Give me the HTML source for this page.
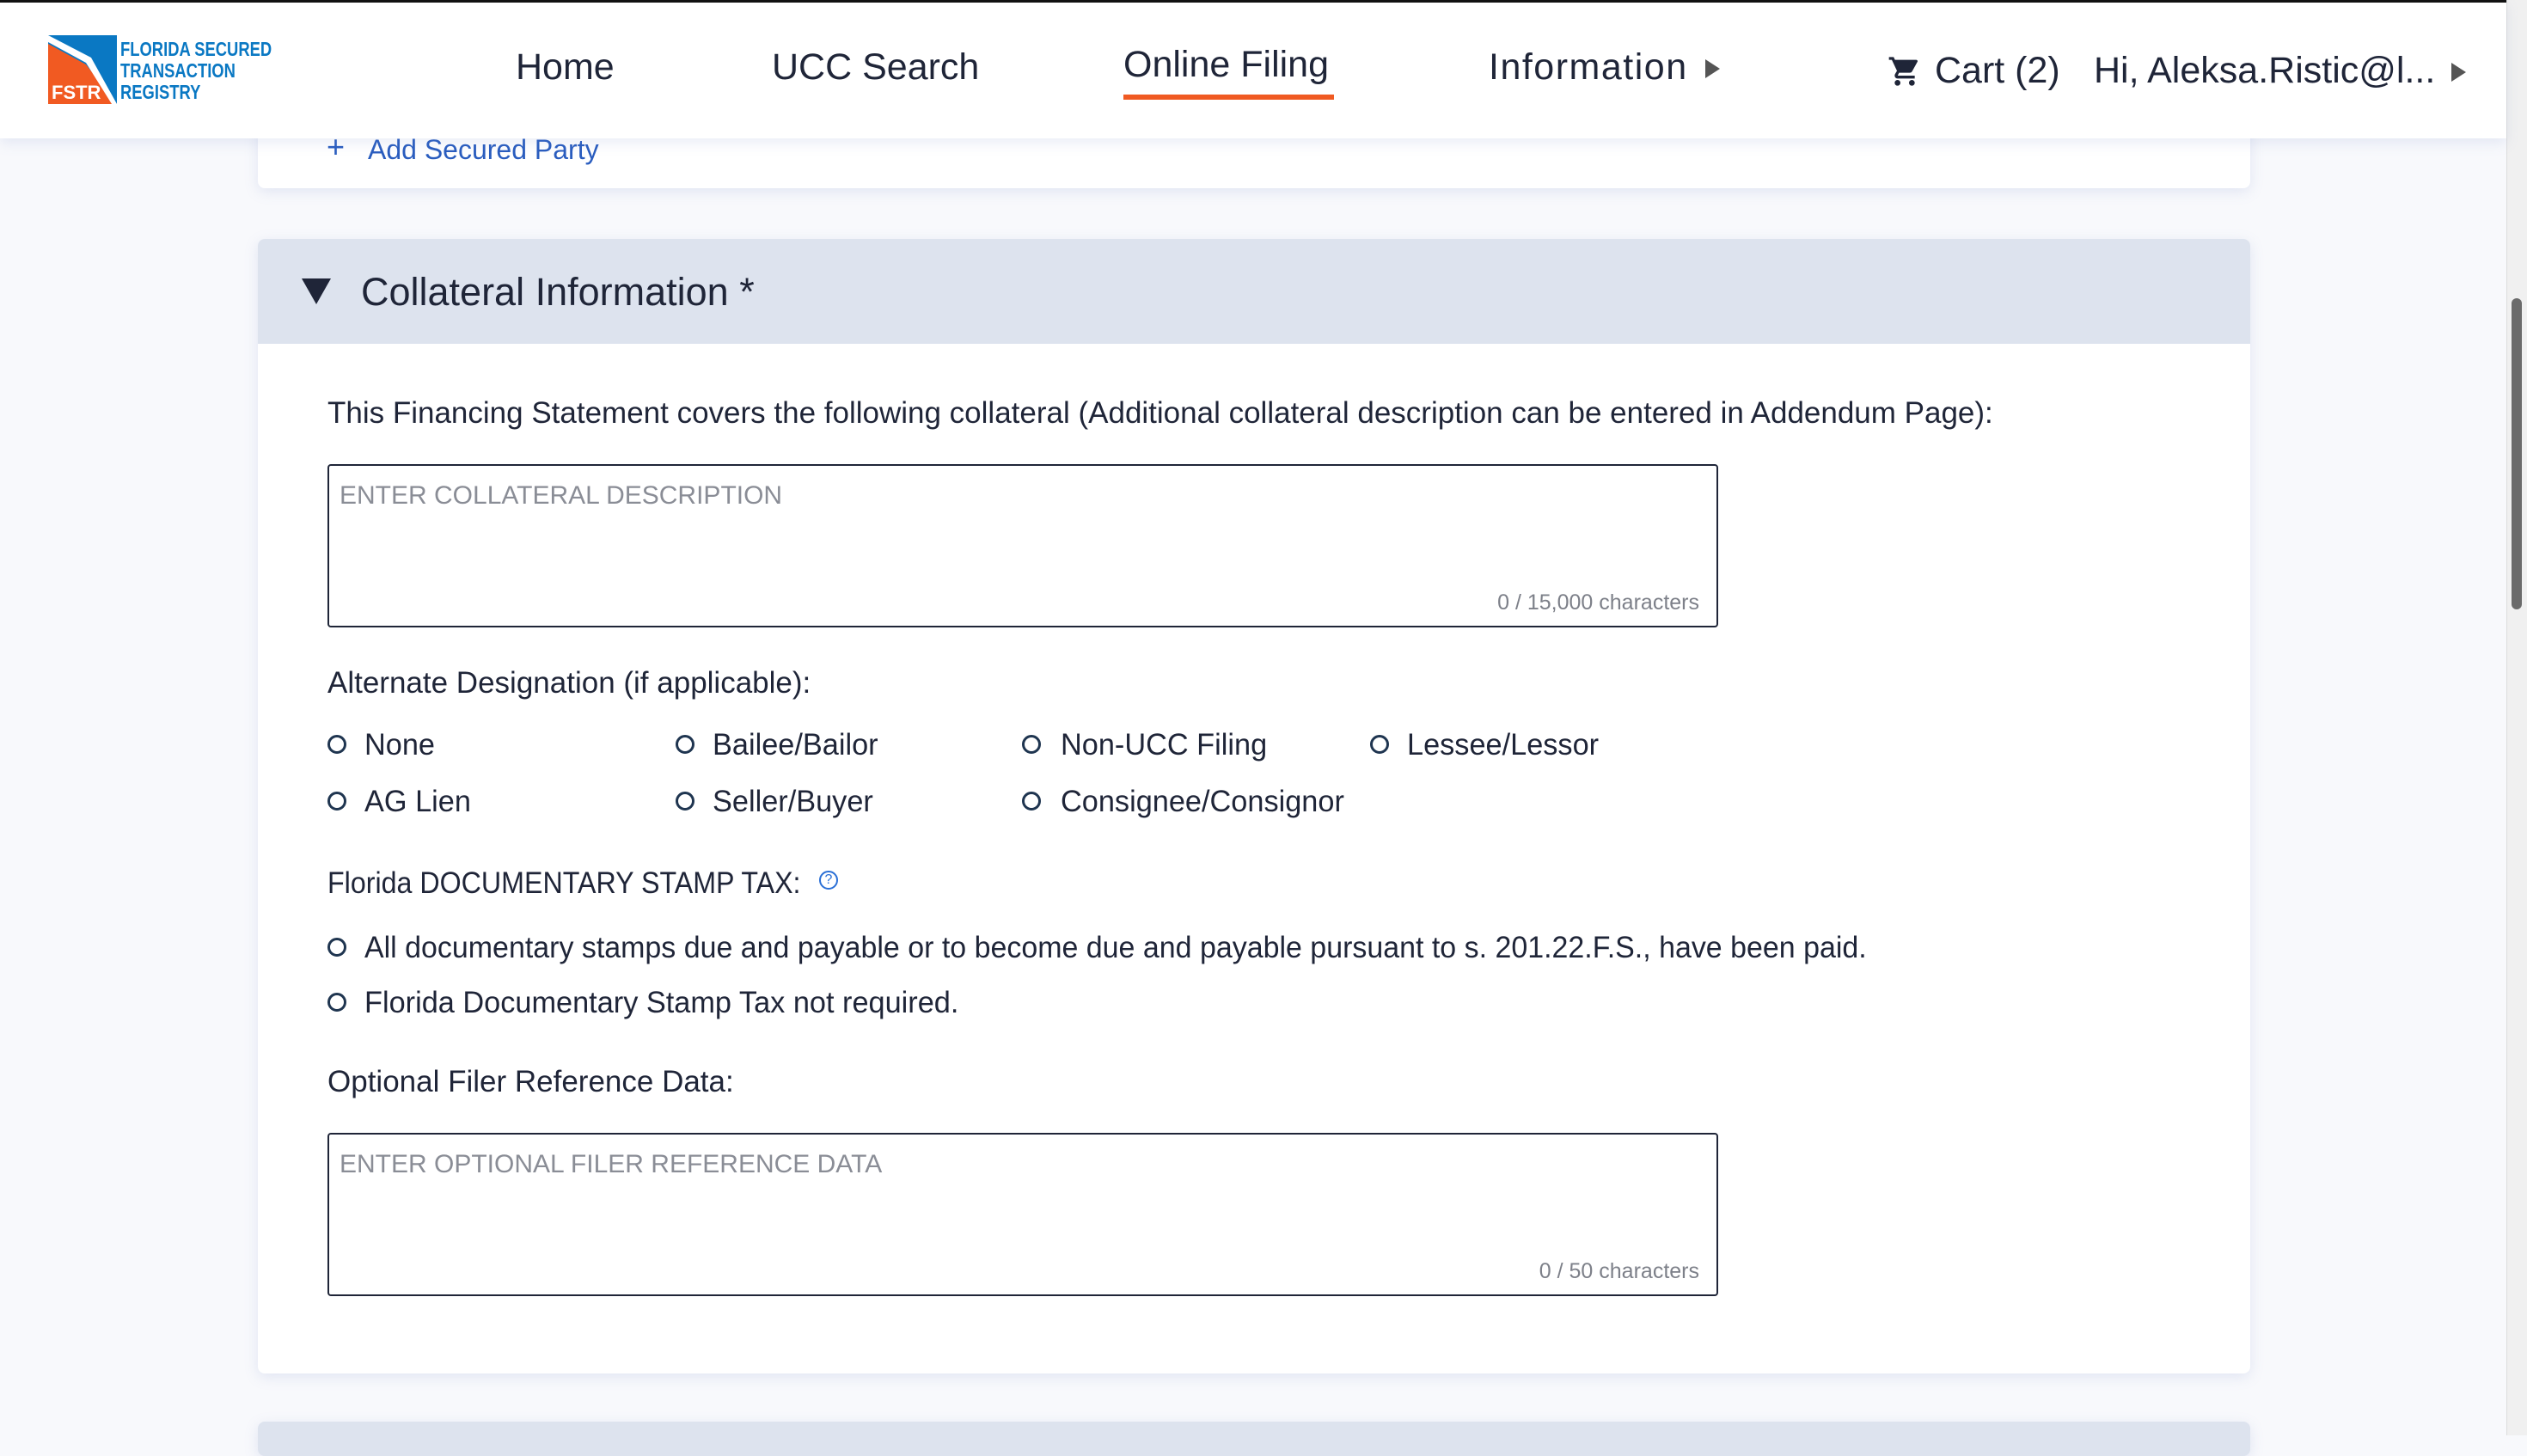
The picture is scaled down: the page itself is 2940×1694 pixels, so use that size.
<!DOCTYPE html>
<html><head><meta charset="utf-8"><style>
*{box-sizing:border-box;margin:0;padding:0}
body{width:2940px;height:1670px;overflow:hidden;background:#f8f9fc;font-family:"Liberation Sans",sans-serif;color:#1f2538;position:relative}
.abs{position:absolute;white-space:nowrap}
.hdr{position:absolute;left:0;top:0;width:2916px;height:161px;background:#fff;border-top:3px solid #111;box-shadow:0 6px 14px rgba(120,140,200,.15);z-index:5}
.nav{font-size:43px;top:51px}
.card{position:absolute;left:300px;width:2318px;background:#fff;border-radius:8px;box-shadow:0 4px 16px rgba(120,140,200,.18)}
.lbl{font-size:35px}
.ta{position:absolute;left:381px;width:1618px;height:190px;border:2px solid #1f2538;border-radius:4px;background:#fff}
.ph{position:absolute;left:12px;top:18px;font-size:30px;color:#8a8d96}
.cnt{position:absolute;right:20px;bottom:12px;font-size:25px;color:#7d8089}
.r{position:absolute;width:22px;height:22px;border:3px solid #1f3550;border-radius:50%}
.sx{transform-origin:left center}
</style></head><body>
<div class="hdr">
 <svg class="abs" style="left:56px;top:38px" width="80" height="80" viewBox="0 0 80 80">
  <polygon points="0,0 80,0 80,80 0,80" fill="#0a78c3"/>
  <polygon points="0,10 44,34 80,80 0,80" fill="#f15a22"/>
  <polygon points="0,0 50,26 80,80 74,80 44,32 0,8" fill="#fff"/>
  <text x="4" y="74" font-size="22" fill="#fff" font-family="Liberation Sans" font-weight="bold">FSTR</text>
 </svg>
 <div class="abs" style="left:140px;top:42px;font-size:23px;line-height:25px;color:#0a78c3;font-weight:bold;transform:scaleX(.8);transform-origin:left">FLORIDA SECURED<br>TRANSACTION<br>REGISTRY</div>
 <div class="abs nav" style="left:600px">Home</div>
 <div class="abs nav" style="left:898px">UCC Search</div>
 <div class="abs nav" style="left:1307px;top:48px">Online Filing</div>
 <div class="abs" style="left:1307px;top:107px;width:245px;height:6px;background:#f05a22"></div>
 <div class="abs nav" style="left:1732px;letter-spacing:1.5px">Information</div>
 <div class="abs" style="left:1984px;top:66px;border-left:17px solid #555;border-top:11px solid transparent;border-bottom:11px solid transparent"></div>
 <svg class="abs" style="left:2196px;top:60px" width="40" height="40" viewBox="0 0 24 24"><path fill="#1f2538" d="M7 18c-1.1 0-2 .9-2 2s.9 2 2 2 2-.9 2-2-.9-2-2-2zM1 2v2h2l3.6 7.6-1.4 2.4c-.1.3-.2.6-.2 1 0 1.1.9 2 2 2h12v-2H7.4c-.1 0-.2-.1-.2-.2v-.1l.9-1.7h7.4c.8 0 1.4-.4 1.7-1l3.6-6.5c.1-.2.2-.3.2-.5 0-.6-.4-1-1-1H5.2l-.9-2H1zm16 16c-1.1 0-2 .9-2 2s.9 2 2 2 2-.9 2-2-.9-2-2-2z"/></svg>
 <div class="abs nav" style="left:2251px;top:55px">Cart (2)</div>
 <div class="abs nav" style="left:2436px;top:55px">Hi, Aleksa.Ristic@l...</div>
 <div class="abs" style="left:2852px;top:70px;border-left:17px solid #555;border-top:11px solid transparent;border-bottom:11px solid transparent"></div>
</div>
<div class="abs" style="left:2916px;top:0;width:24px;height:1670px;background:#f0f0f0;border-left:1px solid #ddd"></div>
<div class="abs" style="left:2922px;top:347px;width:12px;height:362px;background:#6b6b6b;border-radius:6px"></div>

<div class="card" style="top:100px;height:119px">
 <div class="abs" style="left:80px;top:50px;font-size:36px;color:#2a5dbf">+</div>
 <div class="abs" style="left:128px;top:56px;font-size:32px;color:#2a5dbf">Add Secured Party</div>
</div>

<div class="card" style="top:278px;height:1320px;overflow:hidden">
 <div class="abs" style="left:0;top:0;width:2318px;height:122px;background:#dde3ee"></div>
 <div class="abs" style="left:51px;top:46px;border-top:30px solid #1f2538;border-left:17px solid transparent;border-right:17px solid transparent"></div>
 <div class="abs" style="left:120px;top:36px;font-size:45px">Collateral Information *</div>
</div>
<div class="abs lbl" style="left:381px;top:461px">This Financing Statement covers the following collateral (Additional collateral description can be entered in Addendum Page):</div>
<div class="ta" style="top:540px"><div class="ph">ENTER COLLATERAL DESCRIPTION</div><div class="cnt">0 / 15,000 characters</div></div>
<div class="abs lbl" style="left:381px;top:775px">Alternate Designation (if applicable):</div>
<div class="r" style="left:381px;top:855px"></div><div class="abs lbl sx" style="left:424px;top:847px;transform:scaleX(.98)">None</div>
<div class="r" style="left:786px;top:855px"></div><div class="abs lbl sx" style="left:829px;top:847px;transform:scaleX(.98)">Bailee/Bailor</div>
<div class="r" style="left:1189px;top:855px"></div><div class="abs lbl sx" style="left:1234px;top:847px;transform:scaleX(.98)">Non-UCC Filing</div>
<div class="r" style="left:1594px;top:855px"></div><div class="abs lbl sx" style="left:1637px;top:847px;transform:scaleX(.98)">Lessee/Lessor</div>
<div class="r" style="left:381px;top:921px"></div><div class="abs lbl sx" style="left:424px;top:913px;transform:scaleX(.98)">AG Lien</div>
<div class="r" style="left:786px;top:921px"></div><div class="abs lbl sx" style="left:829px;top:913px;transform:scaleX(.98)">Seller/Buyer</div>
<div class="r" style="left:1189px;top:921px"></div><div class="abs lbl sx" style="left:1234px;top:913px;transform:scaleX(.98)">Consignee/Consignor</div>
<div class="abs lbl sx" style="left:381px;top:1008px;transform:scaleX(.92)">Florida DOCUMENTARY STAMP TAX:</div>
<div class="abs" style="left:953px;top:1013px;width:22px;height:22px;border:2px solid #2a6fd6;border-radius:50%;font-size:16px;color:#2a6fd6;text-align:center;line-height:18px">?</div>
<div class="r" style="left:381px;top:1091px"></div><div class="abs lbl sx" style="left:424px;top:1083px;transform:scaleX(.97)">All documentary stamps due and payable or to become due and payable pursuant to s. 201.22.F.S., have been paid.</div>
<div class="r" style="left:381px;top:1155px"></div><div class="abs lbl sx" style="left:424px;top:1147px;transform:scaleX(.98)">Florida Documentary Stamp Tax not required.</div>
<div class="abs lbl" style="left:381px;top:1239px">Optional Filer Reference Data:</div>
<div class="ta" style="top:1318px"><div class="ph">ENTER OPTIONAL FILER REFERENCE DATA</div><div class="cnt">0 / 50 characters</div></div>
<div class="card" style="top:1654px;height:40px;background:#dde3ee"></div>
</body></html>
